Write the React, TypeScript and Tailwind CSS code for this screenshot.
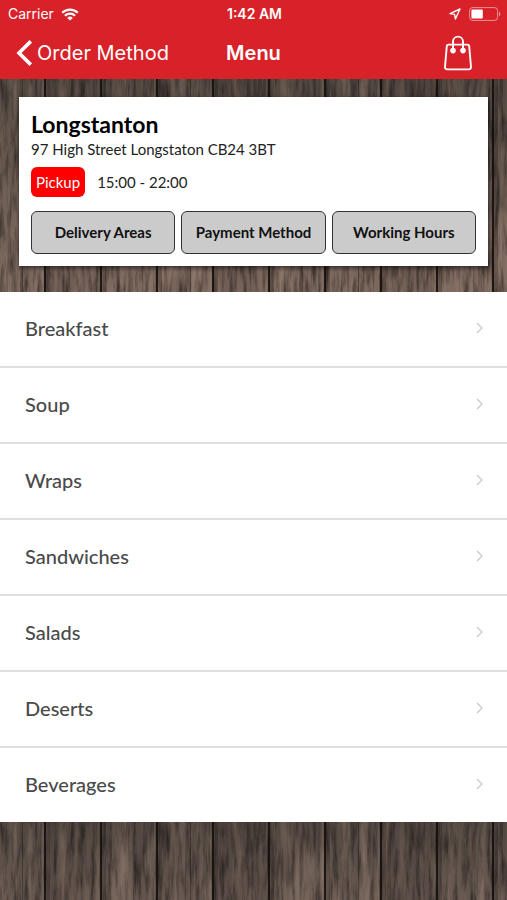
import { useId } from 'react';

const CATEGORIES = ['Breakfast', 'Soup', 'Wraps', 'Sandwiches', 'Salads', 'Deserts', 'Beverages'];
const INFO_ACTIONS = ['Delivery Areas', 'Payment Method', 'Working Hours'];

function WoodBackdrop({ bottomTone }: { bottomTone: string }) {
  const id = useId();
  return (
    <svg aria-hidden="true" className="absolute inset-0 h-full w-full">
      <defs>
        <linearGradient id={`${id}-tone`} x1="0" y1="0" x2="0" y2="1">
          <stop offset="0" stopColor="#504740" />
          <stop offset="1" stopColor={bottomTone} />
        </linearGradient>
        <filter id={`${id}-grain`} x="0" y="0" width="100%" height="100%" colorInterpolationFilters="sRGB">
          <feTurbulence type="fractalNoise" baseFrequency="0.24 0.03" numOctaves="4" seed="8" />
          <feColorMatrix values="0 0 0 0 0.12  0 0 0 0 0.1  0 0 0 0 0.09  1.6 0 0 0 -0.64" />
        </filter>
        <filter id={`${id}-light`} x="0" y="0" width="100%" height="100%" colorInterpolationFilters="sRGB">
          <feTurbulence type="fractalNoise" baseFrequency="0.1 0.008" numOctaves="4" seed="21" />
          <feColorMatrix values="0 0 0 0 0.68  0 0 0 0 0.57  0 0 0 0 0.51  1 0 0 0 -0.45" />
        </filter>
        <pattern id={`${id}-planks`} x="44" width="168" height="900" patternUnits="userSpaceOnUse">
          <rect width="56" height="900" fill="#1c1510" opacity="0.1" />
          <rect x="68" width="16" height="900" fill="#a58a7b" opacity="0.08" />
          <rect x="126" width="15" height="900" fill="#a58a7b" opacity="0.08" />
          <rect x="146" width="1" height="900" fill="#120e0c" opacity="0.35" />
          {[0, 56, 112].map((x) => (
            <g key={x}>
              <rect x={x} width="6" height="900" fill="#1a1411" opacity="0.25" />
              <rect x={x} width="2" height="900" fill="#120e0c" opacity="0.85" />
              <rect x={x + 54} width="1" height="900" fill="#a08a7c" opacity="0.15" />
            </g>
          ))}
        </pattern>
      </defs>
      <rect width="100%" height="100%" fill={`url(#${id}-tone)`} />
      <rect width="100%" height="100%" filter={`url(#${id}-grain)`} />
      <rect width="100%" height="100%" filter={`url(#${id}-light)`} />
      <rect width="100%" height="100%" fill={`url(#${id}-planks)`} />
    </svg>
  );
}

function WifiIcon() {
  return (
    <svg aria-hidden="true" viewBox="0 0 18 13" className="h-[13px] w-[18px]" fill="none" stroke="currentColor" strokeWidth="2.2">
      <path d="M1.200 4.800a11 11 0 0 1 15.600 0" />
      <path d="M3.900 7.800a7.200 7.200 0 0 1 10.200 0" />
      <path d="M9 12.600 6.200 9.900a4 4 0 0 1 5.600 0z" fill="currentColor" stroke="none" />
    </svg>
  );
}

function StatusBar() {
  return (
    <div className="grid h-7 grid-cols-[1fr_auto_1fr] items-center pr-[6px] pl-2 text-[14px] leading-4">
      <div className="flex items-center gap-[7px]">
        <span>Carrier</span>
        <WifiIcon />
      </div>
      <span className="font-semibold">1:42 AM</span>
      <div className="flex items-center justify-end gap-2">
        <svg aria-hidden="true" viewBox="0 0 12 12" className="size-3" fill="none" stroke="currentColor" strokeWidth="1.4" strokeLinejoin="round">
          <path d="M11 1 1 5.600l4.600.8.8 4.600z" />
        </svg>
        <svg aria-hidden="true" viewBox="0 0 32 14" className="h-[14px] w-8" fill="none">
          <rect x="0.6" y="0.6" width="28" height="12.8" rx="3" stroke="currentColor" strokeOpacity="0.5" />
          <rect x="2.4" y="2.4" width="11.4" height="9.2" rx="1" fill="currentColor" />
          <path d="M30 4.800v4.400c1.700-.8 1.700-3.600 0-4.400z" fill="currentColor" fillOpacity="0.6" />
        </svg>
      </div>
    </div>
  );
}

function NavBar() {
  return (
    <div className="grid h-[51px] grid-cols-[1fr_auto_1fr] items-center px-4 pb-[2px] text-[20px] leading-6">
      <button type="button" className="flex items-center gap-[5px]">
        <svg aria-hidden="true" viewBox="0 0 16 26" className="h-[26px] w-4" fill="none" stroke="currentColor" strokeWidth="3.6">
          <path d="M14.800 1.400 3 13l11.800 11.600" />
        </svg>
        <span className="whitespace-nowrap">Order Method</span>
      </button>
      <h1 className="font-semibold">Menu</h1>
      <button type="button" aria-label="Shopping bag" className="mr-[18px] justify-self-end">
        <svg aria-hidden="true" viewBox="0 0 30 36" className="h-9 w-[30px]" fill="none" stroke="currentColor" strokeWidth="1.9" strokeLinejoin="round">
          <path d="M5.600 9.600h18.800c1 0 1.700.6 1.800 1.600L28 32c.1 1.400-.8 2.400-2.100 2.400H4.100C2.800 34.400 1.900 33.400 2 32l1.800-20.800c.1-1 .8-1.600 1.800-1.600z" />
          <path d="M10 16V6.600a5 5 0 0 1 10 0V16" />
          <circle cx="10" cy="15.600" r="2.800" fill="currentColor" stroke="none" />
          <circle cx="20" cy="15.600" r="2.800" fill="currentColor" stroke="none" />
        </svg>
      </button>
    </div>
  );
}

function StoreCard() {
  return (
    <section className="relative bg-white px-3 pt-[15px] pb-3 text-black shadow-[1px_2px_5px_rgba(0,0,0,0.6)]">
      <h2 className="text-[23px] leading-6 font-bold">Longstanton</h2>
      <p className="mt-[3px] text-[15px] leading-5 text-[#222]">97 High Street Longstaton CB24 3BT</p>
      <div className="mt-2 flex items-center gap-3 text-[15px] leading-5 text-[#222]">
        <span className="rounded-md bg-[#fe0000] px-[5px] py-[5px] text-white">Pickup</span>
        <span>15:00 - 22:00</span>
      </div>
      <div className="mt-[14px] grid grid-cols-3 gap-[6px]">
        {INFO_ACTIONS.map((label) => (
          <button
            key={label}
            type="button"
            className="h-[43px] rounded-md border border-[#333] bg-[#cbcbcb] text-[15px] font-bold whitespace-nowrap text-[#111]"
          >
            {label}
          </button>
        ))}
      </div>
    </section>
  );
}

function CategoryList() {
  return (
    <ul className="divide-y-2 divide-[#dfdfdf] bg-white">
      {CATEGORIES.map((name) => (
        <li key={name}>
          <a href="#" className="flex h-[74px] items-center justify-between pr-[23px] pb-[2px] pl-[25px] text-[20px] leading-6 font-medium text-[#4a4a4a]">
            <span>{name}</span>
            <svg aria-hidden="true" viewBox="0 0 9 12" className="h-3 w-[9px]" fill="none" stroke="#cfcfcf" strokeWidth="1.5">
              <path d="M2 1l5 5-5 5" />
            </svg>
          </a>
        </li>
      ))}
    </ul>
  );
}

export default function App() {
  return (
    <div className="flex min-h-screen flex-col font-['Lato',sans-serif]">
      <header className="bg-[#d82128] font-['Inter','Liberation_Sans',sans-serif] text-white">
        <StatusBar />
        <NavBar />
      </header>
      <main className="flex flex-1 flex-col">
        <div className="relative px-[19px] pt-[18px] pb-[26px]">
          <WoodBackdrop bottomTone="#7c685d" />
          <StoreCard />
        </div>
        <CategoryList />
        <div className="relative flex-1">
          <WoodBackdrop bottomTone="#64564f" />
        </div>
      </main>
    </div>
  );
}
